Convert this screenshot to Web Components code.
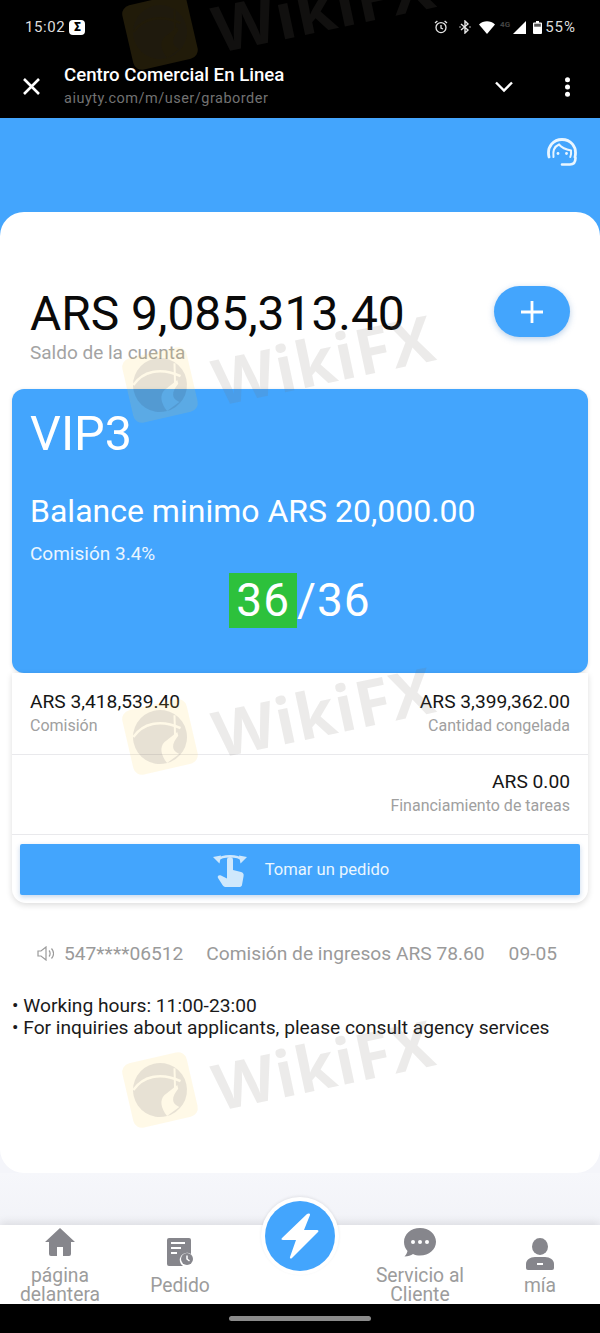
<!DOCTYPE html>
<html lang="es"><head><meta charset="utf-8"><title>Centro Comercial En Linea</title>
<style>html,body{margin:0;padding:0;background:#000;overflow:hidden}body{width:600px;height:1333px;font-family:Roboto,"Liberation Sans",sans-serif}</style>
</head><body>
<app-shell></app-shell>
<script>
const BLUE='#43a5fd';
function def(name,html){customElements.define(name,class extends HTMLElement{constructor(){super();const r=this.attachShadow({mode:'open'});r.innerHTML=html;}});}

def('status-bar',`<style>
:host{display:flex;align-items:center;height:54px;padding:0 24px 0 25px;color:#ddd;font-size:15px;letter-spacing:.6px;box-sizing:border-box}
.s{display:inline-flex;align-items:center;justify-content:center;width:16px;height:15px;background:#fff;color:#000;border-radius:4px;font-size:12px;font-weight:900;margin-left:4px;letter-spacing:0}
.sp{flex:1}.r{display:flex;align-items:center}svg{display:block}
.g{font-size:8px;font-weight:700;color:#444;letter-spacing:0;width:14px;margin-top:-5px;text-align:center}
.pc{margin-left:3px;letter-spacing:1px}
</style><span>15:02</span><span class="s">Σ</span><span class="sp"></span><span class="r">
<svg width="14" height="14" viewBox="0 0 14 14" fill="none" stroke="#e6e6e6" stroke-width="1.3"><circle cx="7" cy="7.6" r="5"/><path d="M7 5v3l2 1M1 3l2.4-2M13 3l-2.4-2"/></svg>
<svg style="margin-left:11px" width="12" height="14" viewBox="0 0 12 14" fill="none" stroke="#e6e6e6" stroke-width="1.4"><path d="M2 4l7 6-3 3V1l3 3-7 6"/><path d="M.5 7h1M10.5 7h1" stroke-width="1.6"/></svg>
<svg style="margin-left:8px" width="16" height="13" viewBox="0 0 16 13"><path d="M0 3.5C4.5-.8 11.5-.8 16 3.5L8 13z" fill="#fff"/></svg>
<span class="g" style="margin-left:3px">4G</span>
<svg style="margin-left:1px" width="13" height="13" viewBox="0 0 13 13"><path d="M13 0v13H0z" fill="#fff"/></svg>
<svg style="margin-left:7px" width="9" height="13" viewBox="0 0 9 13"><path d="M3 0h3v1.500h2a1 1 0 0 1 1 1V12a1 1 0 0 1-1 1H1a1 1 0 0 1-1-1V2.500a1 1 0 0 1 1-1h2z" fill="#fff"/><rect x="1.200" y="2.700" width="6.600" height="3" fill="#555"/></svg>
<span class="pc">55%</span></span>`);

def('browser-bar',`<style>
:host{display:flex;align-items:flex-start;height:64px;box-sizing:border-box;position:relative}
.x{width:64px;flex:none;display:flex;justify-content:flex-start;padding:24px 0 0 23px;box-sizing:border-box}
.t{flex:1;color:#fff}.a{font-size:18.650px;font-weight:500;line-height:22px;margin-top:10px}.b{font-size:14.500px;line-height:20px;color:#727272;margin-top:3px;letter-spacing:.5px}
.c{margin:27px 52px 0 0}.m{margin:23px 30px 0 0}svg{display:block}
</style><div class="x"><svg width="17" height="17" viewBox="0 0 17 17" stroke="#fff" stroke-width="2.600" fill="none"><path d="M1 1l15 15M16 1L1 16"/></svg></div>
<div class="t"><div class="a">Centro Comercial En Linea</div><div class="b">aiuyty.com/m/user/graborder</div></div>
<svg class="c" width="18" height="12" viewBox="0 0 18 12" fill="none" stroke="#fff" stroke-width="2.400"><path d="M1 1.500l8 8 8-8"/></svg>
<svg class="m" width="5" height="20" viewBox="0 0 5 20" fill="#fff"><circle cx="2.500" cy="2.800" r="2.500"/><circle cx="2.500" cy="10" r="2.500"/><circle cx="2.500" cy="17.200" r="2.500"/></svg>`);

def('agent-band',`<style>:host{display:flex;justify-content:flex-end;height:94px;background:${BLUE};padding:20px 22px 0 0;box-sizing:border-box}svg{display:block}</style>
<svg width="32" height="29" viewBox="0 0 32 29" fill="none" stroke="#eaf6ff" stroke-width="2.800" stroke-linecap="round"><path d="M3 19C.5 8 8 1.500 16 1.500S31.500 8 29 19"/><path d="M7.500 19C6.500 12 9.500 8 13 6.500c3 3.500 7 5 12 6 .3 2 0 4.500-.7 6.500" stroke-width="2"/><circle cx="12" cy="15.500" r="1.400" fill="#eaf6ff" stroke="none"/><circle cx="20.500" cy="15.500" r="1.400" fill="#eaf6ff" stroke="none"/><path d="M29.500 20c0 4-2 6.500-5.500 6.500h-8" stroke-width="2.600"/></svg>`);

def('balance-head',`<style>
:host{display:flex;justify-content:space-between;padding:74px 30px 0;height:177px;box-sizing:border-box}
.a{font-size:47.900px;line-height:56px;color:#0a0a0a}.l{font-size:19px;line-height:24px;color:#a3a3a3;margin-top:-1px}
button{all:unset;width:76px;height:51px;border-radius:26px;background:${BLUE};box-shadow:0 2px 6px rgba(60,120,190,.35);display:flex;align-items:center;justify-content:center}
</style><div><div class="a"><slot name="amount"></slot></div><div class="l"><slot name="label"></slot></div></div>
<button aria-label="Agregar"><svg width="24" height="24" viewBox="0 0 24 24" stroke="#fff" stroke-width="2.800"><path d="M12 1v22M1 12h22"/></svg></button>`);

def('vip-card',`<style>
:host{display:block;margin:0 12px;height:284px;background:${BLUE};border-radius:12px;color:#fff;padding:19px 18px 0;box-sizing:border-box;box-shadow:0 1px 4px rgba(0,0,0,.12)}
.v{font-size:48.500px;line-height:52px}.b{font-size:32px;line-height:38px;margin-top:32px}.c{font-size:19px;line-height:22px;margin-top:13px;color:#eaf5ff}
.n{display:flex;justify-content:center;font-size:46px;line-height:55px;margin-top:8px;letter-spacing:1px}.h{background:#2dc13c;padding:0 7px}
</style><div class="v"><slot name="level"></slot></div><div class="b"><slot name="min"></slot></div><div class="c"><slot name="rate"></slot></div>
<div class="n"><span class="h"><slot name="done"></slot></span><span><slot name="total"></slot></span></div>`);

def('stat-item',`<style>:host{display:block;text-align:var(--al,left)}.v{font-size:19.200px;line-height:24px;color:#151515}.l{font-size:16px;line-height:22px;color:#a0a0a0;margin-top:1px}</style>
<div class="v"><slot name="value"></slot></div><div class="l"><slot name="label"></slot></div>`);

def('stats-card',`<style>
:host{display:block;margin:0 12px;height:230px;background:#fff;border-radius:0 0 14px 14px;box-shadow:0 2px 6px rgba(0,0,0,.14);box-sizing:border-box}
</style><slot></slot>`);
def('stat-row',`<style>:host{display:flex;justify-content:space-between;height:var(--h,82px);padding:var(--p,17px) 18px 0;box-sizing:border-box;border-bottom:1px solid #e9e9ec}</style><slot></slot>`);

def('grab-button',`<style>
:host{display:flex;align-items:center;justify-content:center;margin:9px 8px 0;height:51px;background:${BLUE};border-radius:2px;color:#eaf6ff;font-size:16.600px;box-shadow:0 2px 5px rgba(60,120,190,.3)}
svg{display:block;margin-right:18px;margin-left:2px;margin-top:3px}
</style><svg width="34" height="36" viewBox="0 0 34 36"><path d="M4 7C10 2 24 2 30 7" fill="none" stroke="#cfe8fc" stroke-width="2.300"/><path d="M0 4l8-1.500-1.500 8zM34 4l-8-1.500 1.500 8z" fill="#cfe8fc"/><path d="M14 7a3 3 0 0 1 6 0v10l8 2c2 .5 3 2 2.600 4l-1.600 9c-.3 1.500-1.500 2-3 2H13c-1.500 0-2.500-.5-3.500-2L5 25c-1-2 1-3.500 3-2.500l6 3z" fill="#cfe8fc"/></svg><slot></slot>`);

def('notice-row',`<style>
:host{display:flex;align-items:center;height:24px;padding-left:37px;color:#9a9a9a;font-size:19.200px;white-space:nowrap;margin-top:38px}
svg{display:block;margin-right:10px}.b{margin-left:23px}.c{margin-left:24px}
</style><svg width="17" height="15" viewBox="0 0 17 15" fill="none" stroke="#9a9a9a" stroke-width="1.200"><path d="M1 5v5h3l5 4V1L4 5z"/><path d="M12 4.500c1.500 1.500 1.500 4.500 0 6M14.500 2.500c2.500 3 2.500 7 0 10"/></svg>
<span><slot name="a"></slot></span><span class="b"><slot name="b"></slot></span><span class="c"><slot name="c"></slot></span>`);

def('work-notes',`<style>:host{display:block;padding:0 12px;font-size:19.200px;line-height:22px;color:#1a1a1a;margin-top:30px;white-space:nowrap}</style><slot></slot>`);

def('main-panel',`<style>:host{display:block;height:961px;background:#fff;border-radius:24px;overflow:hidden}</style><slot></slot>`);

def('tab-item',`<style>:host{display:flex;flex-direction:column;align-items:center;justify-content:center;width:120px;height:76px;color:#9c9c9c;font-size:19.300px;line-height:19px;text-align:center}
.i{height:28px;margin-bottom:10px;display:flex;justify-content:center}::slotted(svg){display:block}</style><div class="i"><slot name="icon"></slot></div><div><slot></slot></div>`);

def('tab-bar',`<style>:host{display:block;position:relative;height:79px;background:#fff;padding-top:3px;box-sizing:border-box;box-shadow:0 -3px 8px rgba(0,0,0,.09)}
.row{display:grid;grid-template-columns:repeat(5,120px)}
.f{position:absolute;left:261px;top:-28px;width:78px;height:78px;border-radius:50%;background:#fff;display:flex;align-items:center;justify-content:center;box-shadow:0 -1px 3px rgba(0,0,0,.08)}
.f span{display:flex;align-items:center;justify-content:center;width:70px;height:70px;border-radius:50%;background:${BLUE}}
</style><div class="row"><slot></slot></div><div class="f"><span><svg width="42" height="48" viewBox="0 0 42 48"><path d="M28 2 3 26c-1 1-.5 2 1 2h13L11 45c-.5 1.500 1 2 2 1l26-26c1-1 .5-2-1-2H25l6-15c.5-1.500-1.500-2-3-1z" fill="#fff"/></svg></span></div>`);

def('nav-pill',`<style>:host{display:flex;justify-content:center;height:29px;background:#000;padding-top:12px;box-sizing:border-box}i{display:block;width:142px;height:5px;border-radius:3px;background:#8a8a8a}</style><i></i>`);

def('wiki-mark',`<style>
:host{position:absolute;left:0;width:600px;height:90px;pointer-events:none;display:block;z-index:5}
.logo{position:absolute;left:127px;top:7px;width:66px;height:66px;border-radius:9px;background:rgba(255,205,70,.13);transform:rotate(-13deg)}
.logo svg{position:absolute;left:5px;top:5px}
.w{position:absolute;left:222px;top:-3px;font:700 64px/80px "Open Sans",Roboto,sans-serif;letter-spacing:1px;color:rgba(120,110,105,.14);transform:rotate(-12deg);transform-origin:0 100%;white-space:nowrap}
</style><div class="logo"><svg width="56" height="56" viewBox="0 0 56 56"><mask id="e"><rect width="56" height="56" fill="#000"/><circle cx="28" cy="28" r="27" fill="#fff"/><path d="M2 22C14 11 32 10 50 24" fill="none" stroke="#000" stroke-width="2.500"/><path d="M46 27 31 34c-6 4-6 12-2 21l14-6C36 44 37 38 46 31z" fill="#000"/><path d="M47 10 43 30" stroke="#000" stroke-width="2"/></mask><rect width="56" height="56" fill="rgba(20,20,45,.1)" mask="url(#e)"/></svg></div><div class="w">WikiFX</div>`);

def('app-shell',`<style>
:host{display:flex;flex-direction:column;position:relative;width:600px;height:1333px;overflow:hidden;background:#f4f5fa}
.top{background:#000;height:118px}.gap{height:52px;background:linear-gradient(#f6f7fb,#f2f3f8)}
.band{background:linear-gradient(${BLUE} 0 0) top/100% 50% no-repeat}
svg{display:block}
</style>
<div class="top"><status-bar></status-bar><browser-bar></browser-bar></div>
<agent-band></agent-band>
<div class="band"><main-panel>
<balance-head><span slot="amount">ARS 9,085,313.40</span><span slot="label">Saldo de la cuenta</span></balance-head>
<vip-card><span slot="level">VIP3</span><span slot="min">Balance minimo ARS 20,000.00</span><span slot="rate">Comisión 3.4%</span><span slot="done">36</span><span slot="total">/36</span></vip-card>
<stats-card>
<stat-row><stat-item><span slot="value">ARS 3,418,539.40</span><span slot="label">Comisión</span></stat-item><stat-item style="--al:right"><span slot="value">ARS 3,399,362.00</span><span slot="label">Cantidad congelada</span></stat-item></stat-row>
<stat-row style="--h:80px;--p:15px"><span></span><stat-item style="--al:right"><span slot="value">ARS 0.00</span><span slot="label">Financiamiento de tareas</span></stat-item></stat-row>
<grab-button>Tomar un pedido</grab-button>
</stats-card>
<notice-row><span slot="a">547****06512</span><span slot="b">Comisión de ingresos ARS 78.60</span><span slot="c">09-05</span></notice-row>
<work-notes>• Working hours: 11:00-23:00<br>• For inquiries about applicants, please consult agency services</work-notes>
</main-panel></div>
<div class="gap"></div>
<tab-bar>
<tab-item><svg slot="icon" width="30" height="28" viewBox="0 0 30 28"><path d="M15 0 0 14h4v12a2 2 0 0 0 2 2h6v-9h6v9h6a2 2 0 0 0 2-2V14h4z" fill="#86868c"/></svg>página<br>delantera</tab-item>
<tab-item><svg slot="icon" width="26" height="28" viewBox="0 0 26 28"><path d="M2 0h20a2 2 0 0 1 2 2v14a7 7 0 0 0-8 12H2a2 2 0 0 1-2-2V2a2 2 0 0 1 2-2z" fill="#86868c"/><path d="M4 5h14M4 10h10M4 15h6" stroke="#fff" stroke-width="1.800"/><circle cx="20" cy="21" r="6" fill="#86868c"/><path d="M20 17.500V21l2.500 2" stroke="#fff" stroke-width="1.500" fill="none"/></svg>Pedido</tab-item>
<tab-item></tab-item>
<tab-item><svg slot="icon" width="32" height="29" viewBox="0 0 32 29"><path d="M16 0C7 0 0 6 0 14c0 3.500 1.300 6.500 3.500 9C3 25 2 27 .5 28.500 4 28.500 7 27.500 9 26c2 1 4.500 1.500 7 1.500 9 0 16-6 16-13.700S25 0 16 0z" fill="#86868c"/><circle cx="9" cy="14" r="2" fill="#fff"/><circle cx="16" cy="14" r="2" fill="#fff"/><circle cx="23" cy="14" r="2" fill="#fff"/></svg>Servicio al<br>Cliente</tab-item>
<tab-item><svg slot="icon" width="28" height="32" viewBox="0 0 28 32"><ellipse cx="14" cy="8.500" rx="8" ry="8.500" fill="#86868c"/><path d="M9 19h10c5 0 9 3 9 7v4a2 2 0 0 1-2 2H2a2 2 0 0 1-2-2v-4c0-4 4-7 9-7z" fill="#86868c"/><rect x="11" y="25" width="6" height="2" fill="#fff"/></svg>mía</tab-item>
</tab-bar>
<nav-pill></nav-pill>
<wiki-mark style="top:-8px"></wiki-mark>
<wiki-mark style="top:345px"></wiki-mark>
<wiki-mark style="top:697px"></wiki-mark>
<wiki-mark style="top:1050px"></wiki-mark>
`);
</script>
</body></html>
